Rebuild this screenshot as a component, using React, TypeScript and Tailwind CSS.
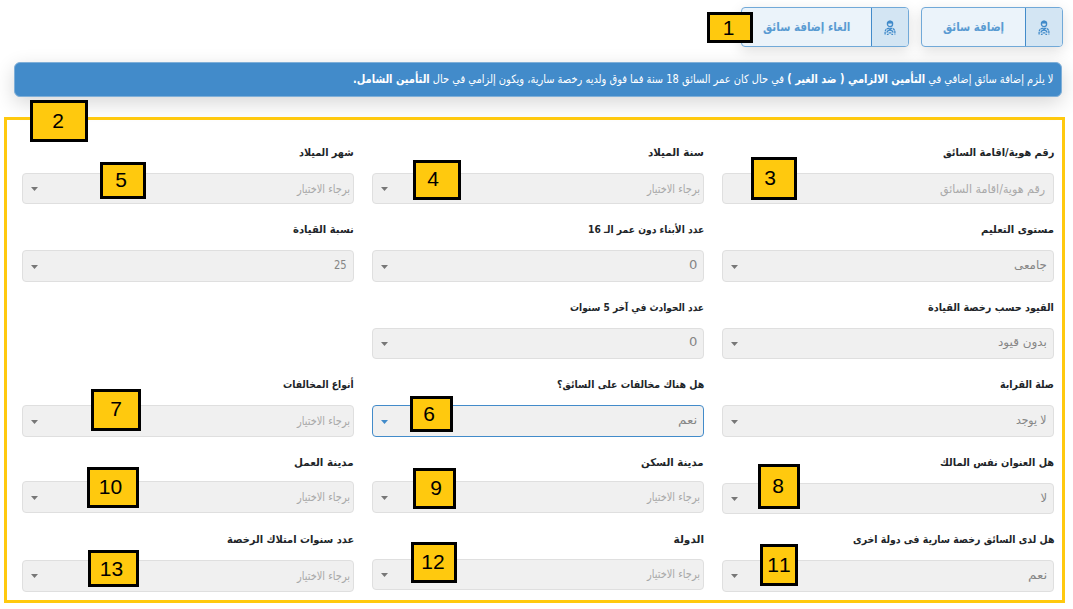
import { useLayoutEffect, useRef, useState, type ReactNode } from 'react';

type FitProps = { width: number; className?: string; children: ReactNode };

/* Right-aligned line of text whose glyphs are condensed to a given width. */
function Fit({ width, className = '', children }: FitProps) {
  const ref = useRef<HTMLSpanElement>(null);
  const [scale, setScale] = useState(1);
  useLayoutEffect(() => {
    if (ref.current) setScale(width / ref.current.offsetWidth);
  }, [width]);
  return (
    <span className={`flex shrink-0 justify-start whitespace-nowrap ${className}`} style={{ width }}>
      <span ref={ref} className="block shrink-0 origin-right" style={{ transform: `scaleX(${scale})` }}>
        {children}
      </span>
    </span>
  );
}

type FieldData = {
  label: string;
  labelWidth: number;
  value: string;
  valueWidth: number;
  kind?: 'input' | 'value' | 'empty';
  active?: boolean;
  box?: string;
};

const empty = { value: 'برجاء الاختيار', valueWidth: 53, kind: 'empty' as const };

const rows: (FieldData | null)[][] = [
  [
    { label: 'رقم هوية/اقامة السائق', labelWidth: 111, value: 'رقم هوية/اقامة السائق', valueWidth: 105, kind: 'input' },
    { label: 'سنة الميلاد', labelWidth: 56, ...empty },
    { label: 'شهر الميلاد', labelWidth: 55, ...empty },
  ],
  [
    { label: 'مستوى التعليم', labelWidth: 73, value: 'جامعى', valueWidth: 33, box: 'h-8' },
    { label: 'عدد الأبناء دون عمر الـ 16', labelWidth: 116, value: '0', valueWidth: 8, box: 'h-8' },
    { label: 'نسبة القيادة', labelWidth: 61, value: '25', valueWidth: 13, box: 'h-8' },
  ],
  [
    { label: 'القيود حسب رخصة القيادة', labelWidth: 126, value: 'بدون قيود', valueWidth: 49 },
    { label: 'عدد الحوادث في آخر 5 سنوات', labelWidth: 134, value: '0', valueWidth: 8 },
    null,
  ],
  [
    { label: 'صلة القرابة', labelWidth: 54, value: 'لا يوجد', valueWidth: 31, box: 'h-8' },
    { label: 'هل هناك مخالفات على السائق؟', labelWidth: 147, value: 'نعم', valueWidth: 19, active: true, box: 'h-8' },
    { label: 'أنواع المخالفات', labelWidth: 71, ...empty, box: 'h-8' },
  ],
  [
    { label: 'هل العنوان نفس المالك', labelWidth: 114, value: 'لا', valueWidth: 7, box: 'mt-[0.5px] h-[31px]' },
    { label: 'مدينة السكن', labelWidth: 63, ...empty, box: '-mt-[1.5px] h-8' },
    { label: 'مدينة العمل', labelWidth: 60, ...empty, box: '-mt-[1.5px] h-8' },
  ],
  [
    { label: 'هل لدى السائق رخصة سارية فى دولة اخرى', labelWidth: 201, value: 'نعم', valueWidth: 19, box: 'h-8' },
    { label: 'الدولة', labelWidth: 30, ...empty, box: '-mt-px h-[31px]' },
    { label: 'عدد سنوات امتلاك الرخصة', labelWidth: 127, ...empty, box: 'h-8' },
  ],
];

function Field({ label, labelWidth, value, valueWidth, kind = 'value', active, box = 'h-[31px]' }: FieldData) {
  const pad = kind === 'empty' ? 'pr-[3px]' : kind === 'input' ? 'pr-2' : 'pr-1.5';
  const tone = kind === 'value' ? 'text-[#858585] pb-0.5' : 'text-[#a9a9a9]';
  return (
    <div className="w-[332px]">
      <div className="flex h-[30px] items-start">
        <Fit width={labelWidth} className="text-[10.5px] leading-[18px] font-bold text-[#212529]">
          {label}
        </Fit>
      </div>
      <div
        className={`flex items-center justify-between rounded-[4px] border bg-[#f0f0f0] pl-2 ${pad} ${box} ${
          active ? 'border-[#428bca]' : 'border-[#dfdfdf]'
        }`}
      >
        <Fit width={valueWidth} className={`text-[11.5px] leading-[18px] ${tone}`}>
          {value}
        </Fit>
        {kind !== 'input' && (
          <svg width="7" height="4" viewBox="0 0 7 4" className={`mt-px ${active ? 'fill-[#428bca]' : 'fill-[#777]'}`}>
            <path d="M0 0h7L3.5 4z" />
          </svg>
        )}
      </div>
    </div>
  );
}

function DriverIcon() {
  return (
    <svg width="12" height="16" viewBox="0 0 12 16" fill="none" stroke="#428bca">
      <circle cx="6" cy="4" r="2.6" strokeWidth="1.3" />
      <path d="M3.2 3.2C3.4 1.6 4.5.8 6 .8s2.6.8 2.8 2.4z" fill="#428bca" strokeWidth=".6" />
      <path d="M1.1 14.6v-2.4c0-2.2 1.3-3.7 3.2-3.9h3.4c1.9.2 3.2 1.7 3.2 3.9v2.4" strokeWidth="1.3" strokeDasharray="2.6 .5" />
      <path d="M2.9 12.6a3.2 3.2 0 0 1 6.2 0M2.9 14.3h1.7M7.4 14.3h1.7" strokeWidth="1.2" />
      <path d="M4.4 8.2L6 9.6l1.6-1.4M4.6 12.8h2.8" strokeWidth="1.3" />
    </svg>
  );
}

function DriverButton({ text, textWidth, className }: { text: string; textWidth: number; className: string }) {
  return (
    <button
      className={`flex h-10 overflow-hidden rounded-[4px] border border-[#71a9d8] bg-[#ebf3fa] shadow-[0_4px_14px_rgba(0,0,0,0.13)] ${className}`}
    >
      <span className="flex h-full w-[37px] items-center justify-center border-l border-[#428bca] bg-[#d3e5f3] pt-0.5">
        <DriverIcon />
      </span>
      <span className="flex h-full flex-1 items-center pr-[21px]">
        <Fit width={textWidth} className="text-[12px] leading-5 font-bold text-[#5a9bd2]">
          {text}
        </Fit>
      </span>
    </button>
  );
}

const badges: [string, string][] = [
  ['1', 'left-[707px] top-[12px] w-[46px] h-[31px] pr-[3px]'],
  ['2', 'left-[30px] top-[100px] w-[58px] h-[42px] pr-[2px]'],
  ['3', 'left-[751px] top-[157px] w-[46px] h-[43px] pr-[8px] pb-[2px]'],
  ['4', 'left-[413px] top-[160px] w-[48px] h-[40px] pr-[8px] pb-[3px]'],
  ['5', 'left-[100px] top-[162px] w-[46px] h-[37px] pr-[4px] pb-[1px]'],
  ['6', 'left-[410px] top-[396px] w-[43px] h-[36px] pr-[5px]'],
  ['7', 'left-[91px] top-[389px] w-[50px] h-[42px] pb-[3px]'],
  ['8', 'left-[758px] top-[464px] w-[42px] h-[45px] pr-[2px] pb-[1px]'],
  ['9', 'left-[413px] top-[468px] w-[43px] h-[41px] pl-[3px] pb-[1px]'],
  ['10', 'left-[87px] top-[467px] w-[52px] h-[41px] pr-[5px] pb-[1px]'],
  ['11', 'left-[760px] top-[544px] w-[38px] h-[42px]'],
  ['12', 'left-[411px] top-[542px] w-[46px] h-[41px] pr-[2px] pb-[2px]'],
  ['13', 'left-[88px] top-[550px] w-[51px] h-[37px] pr-[4px]'],
];

export default function App() {
  return (
    <div
      dir="rtl"
      className="relative h-[609px] w-[1073px] overflow-hidden bg-white [font-family:'DejaVu_Sans',sans-serif]"
    >
      <header className="flex gap-3 pt-[7px] pr-[10px]">
        <DriverButton text="إضافة سائق" textWidth={61} className="w-[142px]" />
        <DriverButton text="الغاء إضافة سائق" textWidth={87} className="w-[168px]" />
      </header>

      <div className="mt-[15px] mr-[11px] flex h-[35px] w-[1048px] items-center rounded-[6px] border border-[#7fafd8] bg-[#428bca] pr-2 pb-0.5 shadow-[0_6px_20px_rgba(0,0,0,0.16)]">
        <Fit width={700} className="text-[11.5px] leading-5 text-white">
          لا يلزم إضافة سائق إضافي في <b>التأمين الالزامي ( ضد الغير )</b> في حال كان عمر السائق 18 سنة فما فوق ولديه
          رخصة سارية، ويكون إلزامي في حال <b>التأمين الشامل.</b>
        </Fit>
      </div>

      <main className="mt-5 mr-2 flex h-[486px] w-[1061px] flex-col border-[3px] border-[#ffc90e] pt-[23px] pr-2">
        {rows.map((row, i) => (
          <div key={i} className="flex h-[77.4px] shrink-0 gap-[18px]">
            {row.map((field, j) => (field ? <Field key={j} {...field} /> : <div key={j} className="w-[332px]" />))}
          </div>
        ))}
      </main>

      {badges.map(([n, place]) => (
        <div
          key={n}
          dir="ltr"
          className={`absolute flex items-center justify-center border-[3px] border-black bg-[#ffc90e] text-[21px] leading-6 text-black [font-kerning:none] [font-family:'Liberation_Sans',Arial,sans-serif] ${place}`}
        >
          {n}
        </div>
      ))}
    </div>
  );
}
